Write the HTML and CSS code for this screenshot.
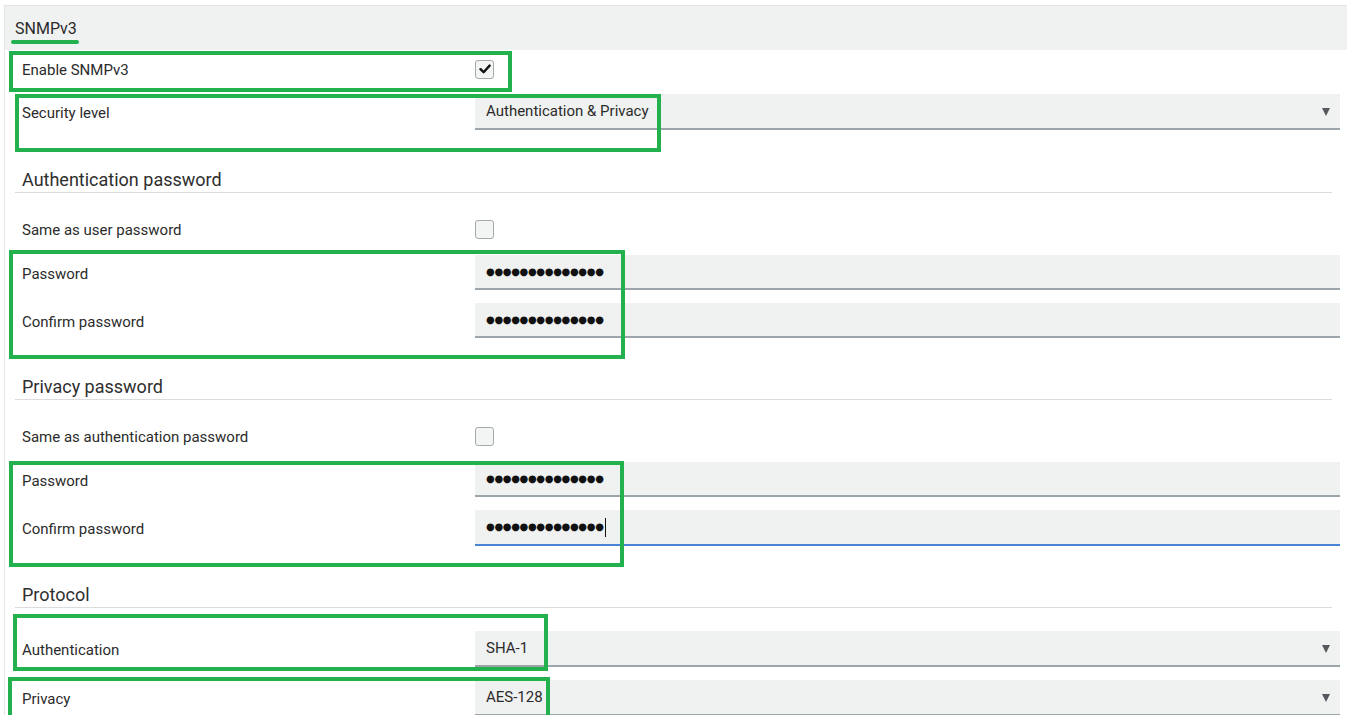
FILE: index.html
```html
<!DOCTYPE html>
<html>
<head>
<meta charset="utf-8">
<link rel="stylesheet" href="styles.css">
</head>
<body>
<div class="page">
  <div class="panel">
    <div class="panel-header">
      <span class="tab">SNMPv3</span>
    </div>
    <div class="content">
      <div class="row row-enable">
        <span class="label">Enable SNMPv3</span>
        <div class="control"><span class="checkbox checked"><svg viewBox="0 0 12 12" width="12" height="12"><path d="M1.5 6.2 L4.6 9.2 L10.6 2.6" fill="none" stroke="#111" stroke-width="2.4" stroke-linecap="round" stroke-linejoin="round"/></svg></span></div>
      </div>
      <div class="row row-field">
        <span class="label">Security level</span>
        <div class="field select"><span>Authentication &amp; Privacy</span><span class="arrow"></span></div>
      </div>

      <div class="heading heading-first">Authentication password</div>
      <div class="row row-check">
        <span class="label">Same as user password</span>
        <div class="control"><span class="checkbox"></span></div>
      </div>
      <div class="row row-field first-field">
        <span class="label">Password</span>
        <div class="field"><span class="dots">●●●●●●●●●●●●●●</span></div>
      </div>
      <div class="row row-field">
        <span class="label">Confirm password</span>
        <div class="field"><span class="dots">●●●●●●●●●●●●●●</span></div>
      </div>

      <div class="heading">Privacy password</div>
      <div class="row row-check">
        <span class="label">Same as authentication password</span>
        <div class="control"><span class="checkbox"></span></div>
      </div>
      <div class="row row-field first-field">
        <span class="label">Password</span>
        <div class="field"><span class="dots">●●●●●●●●●●●●●●</span></div>
      </div>
      <div class="row row-field">
        <span class="label">Confirm password</span>
        <div class="field focused"><span class="dots">●●●●●●●●●●●●●●</span><span class="caret"></span></div>
      </div>

      <div class="heading heading-proto">Protocol</div>
      <div class="row row-field proto-first">
        <span class="label">Authentication</span>
        <div class="field select"><span>SHA-1</span><span class="arrow"></span></div>
      </div>
      <div class="row row-field">
        <span class="label">Privacy</span>
        <div class="field select"><span>AES-128</span><span class="arrow"></span></div>
      </div>
    </div>
  </div>

  <div class="mark mark-tab"></div>
  <div class="mark box1"></div>
  <div class="mark box2"></div>
  <div class="mark box3"></div>
  <div class="mark box4"></div>
  <div class="mark box5"></div>
  <div class="mark box6"></div>
</div>
</body>
</html>
```

FILE: styles.css
```css
html, body {
  margin: 0;
  padding: 0;
  background: #ffffff;
}
body {
  font-family: Roboto, "Liberation Sans", Arial, sans-serif;
  font-size: 15px;
  color: #2b2b2b;
  overflow: hidden;
  height: 715px;
}
.page {
  position: relative;
  width: 1347px;
  height: 715px;
  overflow: hidden;
}
.panel {
  margin: 5px 0 0 4px;
  border-left: 1px solid #e3e6e8;
  border-top: 1px solid #dfe3e6;
}
.panel-header {
  height: 44px;
  background: #f0f1f1;
  padding-left: 10px;
  display: flex;
  align-items: center;
}
.tab {
  font-size: 16px;
  color: #2b2b2b;
  margin-top: 1px;
}
.content {
  padding: 0 7px 0 10px;
}
.row {
  display: grid;
  grid-template-columns: 460px 1fr;
  align-items: center;
}
.label {
  padding: 2px 0 0 7px;
  line-height: 18px;
}
.row-enable {
  height: 38px;
}
.row-check {
  height: 36px;
  margin-top: 18px;
}
.control {
  display: flex;
  align-items: center;
}
.checkbox {
  box-sizing: border-box;
  width: 19px;
  height: 19px;
  border: 1px solid #a3a9ad;
  border-radius: 3px;
  background: #f3f4f4;
  display: flex;
  align-items: center;
  justify-content: center;
}
.row-field {
  margin-top: 13px;
}
.row-enable + .row-field {
  margin-top: 6px;
}
.row-field.first-field {
  margin-top: 8px;
}
.row-field.proto-first {
  margin-top: 23px;
}
.field {
  box-sizing: border-box;
  height: 35px;
  background: #f0f1f1;
  border-bottom: 2px solid #9ba5aa;
  display: flex;
  align-items: center;
  padding: 0 11px;
  position: relative;
}
.field.select {
  height: 36px;
  justify-content: space-between;
  padding-right: 10px;
}
.field.focused {
  border-bottom-color: #4a86d6;
  height: 36px;
}
.arrow {
  width: 0;
  height: 0;
  border-left: 4.5px solid transparent;
  border-right: 4.5px solid transparent;
  border-top: 8px solid #555a5e;
  margin-top: 2px;
}
.dots {
  font-family: "DejaVu Sans", sans-serif;
  font-size: 10px;
  color: #111;
  letter-spacing: -0.33px;
  line-height: 16px;
}
.caret {
  display: inline-block;
  width: 1px;
  height: 19px;
  background: #111;
  margin-left: 1px;
}
.heading {
  font-size: 18px;
  line-height: 22px;
  color: #2e2e2e;
  padding: 1px 0 1px 7px;
  border-bottom: 1px solid #dcdcdc;
  margin: 37px 8px 0 0;
}
.heading-first {
  margin-top: 38px;
}
.heading-proto {
  margin-top: 37px;
}
.heading + .row-check {
  margin-top: 18px;
}

/* annotation overlays */
.mark {
  position: absolute;
  box-sizing: border-box;
  border: 4px solid #22b14c;
}
.mark-tab {
  left: 11px;
  top: 40px;
  width: 68px;
  height: 4px;
  border: none;
  border-radius: 2px;
  background: #22b14c;
}
.box1 { left: 9px;  top: 51px;  width: 503px; height: 41px; }
.box2 { left: 15px; top: 94px;  width: 646px; height: 58px; }
.box3 { left: 9px;  top: 250px; width: 616px; height: 109px; }
.box4 { left: 9px;  top: 461px; width: 615px; height: 106px; }
.box5 { left: 13px; top: 614px; width: 535px; height: 57px; }
.box6 { left: 8px;  top: 677px; width: 542px; height: 42px; }
```
